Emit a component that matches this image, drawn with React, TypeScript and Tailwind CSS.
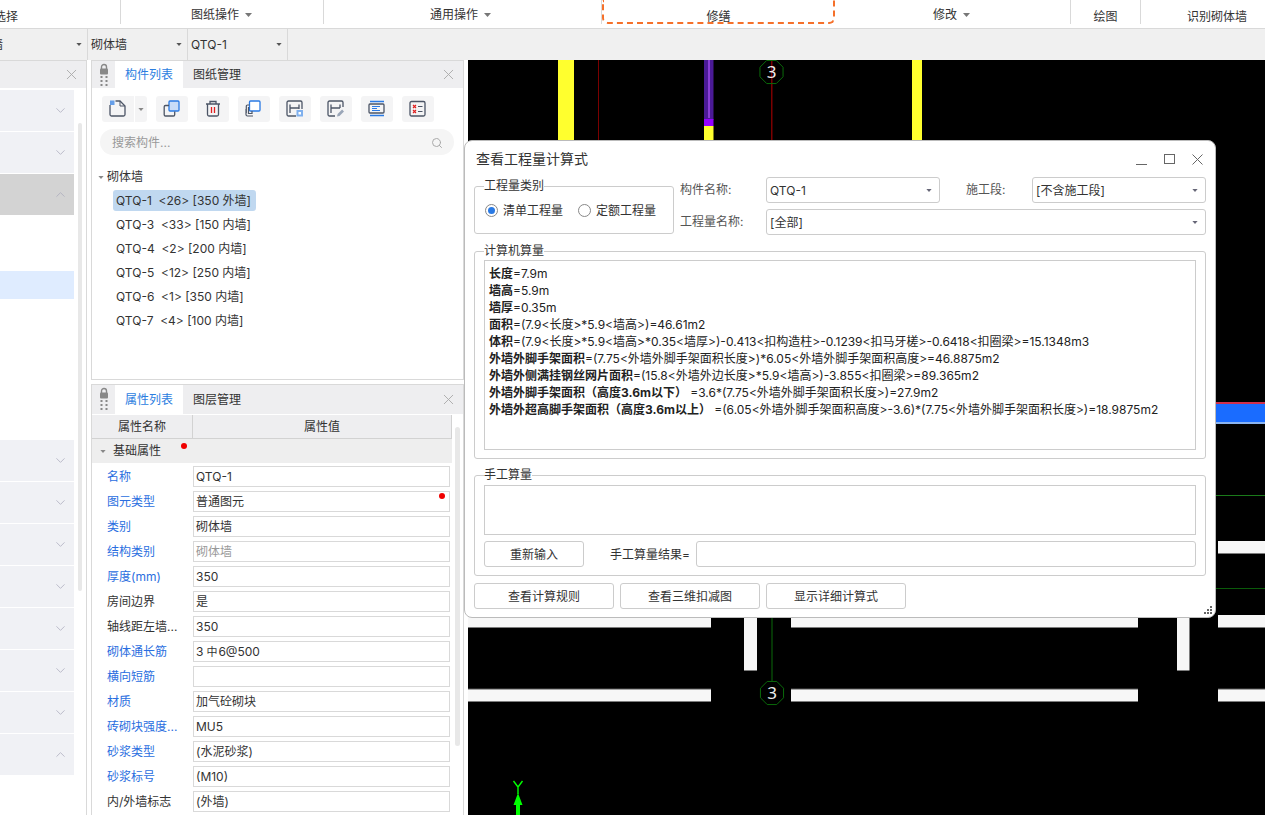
import { ChevronDown, ChevronUp, Search, X } from 'lucide-react';
import type { ReactNode } from 'react';

const leftItems = [
  { h: 'h-[41px]', bg: 'bg-[#f0f1f5]', mt: 'mt-[2px]', up: false },
  { h: 'h-[41px]', bg: 'bg-[#f0f1f5]', mt: 'mt-px', up: false },
  { h: 'h-[41px]', bg: 'bg-[#d3d3d3]', mt: 'mt-px', up: true },
];
const leftItemsLower = [false, false, false, false, false, false, false, true];

const components = [
  'QTQ-1 \u00a0<26> [350 外墙]',
  'QTQ-3 \u00a0<33> [150 内墙]',
  'QTQ-4 \u00a0<2> [200 内墙]',
  'QTQ-5 \u00a0<12> [250 内墙]',
  'QTQ-6 \u00a0<1> [350 内墙]',
  'QTQ-7 \u00a0<4> [100 内墙]',
];

const props: { label: string; value: ReactNode; blue?: boolean; muted?: boolean; dot?: boolean }[] = [
  { label: '名称', value: 'QTQ-1', blue: true },
  { label: '图元类型', value: '普通图元', blue: true, dot: true },
  { label: '类别', value: '砌体墙', blue: true },
  { label: '结构类别', value: '砌体墙', blue: true, muted: true },
  { label: '厚度(mm)', value: '350', blue: true },
  { label: '房间边界', value: '是' },
  { label: '轴线距左墙...', value: '350' },
  {
    label: '砌体通长筋',
    value: (
      <>
        3<span className="ml-[3px] mr-px align-[2px] text-[11px]">中</span>6@500
      </>
    ),
    blue: true,
  },
  { label: '横向短筋', value: '', blue: true },
  { label: '材质', value: '加气砼砌块', blue: true },
  { label: '砖砌块强度...', value: 'MU5', blue: true },
  { label: '砂浆类型', value: '(水泥砂浆)', blue: true },
  { label: '砂浆标号', value: '(M10)', blue: true },
  { label: '内/外墙标志', value: '(外墙)' },
];

const formulas = [
  ['长度', '=7.9m'],
  ['墙高', '=5.9m'],
  ['墙厚', '=0.35m'],
  ['面积', '=(7.9<长度>*5.9<墙高>)=46.61m2'],
  ['体积', '=(7.9<长度>*5.9<墙高>*0.35<墙厚>)-0.413<扣构造柱>-0.1239<扣马牙槎>-0.6418<扣圈梁>=15.1348m3'],
  ['外墙外脚手架面积', '=(7.75<外墙外脚手架面积长度>)*6.05<外墙外脚手架面积高度>=46.8875m2'],
  ['外墙外侧满挂钢丝网片面积', '=(15.8<外墙外边长度>*5.9<墙高>)-3.855<扣圈梁>=89.365m2'],
  ['外墙外脚手架面积（高度3.6m以下）', ' =3.6*(7.75<外墙外脚手架面积长度>)=27.9m2'],
  ['外墙外超高脚手架面积（高度3.6m以上）', ' =(6.05<外墙外脚手架面积高度>-3.6)*(7.75<外墙外脚手架面积长度>)=18.9875m2'],
];

function Caret({ color = '#777', size = 7 }: { color?: string; size?: number }) {
  return (
    <svg width={size} height={size - 3} viewBox="0 0 7 4" className="shrink-0">
      <path d="M0 0h7L3.5 4z" fill={color} />
    </svg>
  );
}

function Lock() {
  return (
    <svg width="10" height="24" viewBox="0 0 10 24" className="shrink-0">
      <path d="M2.5 6V4a2.5 2.5 0 0 1 5 0v2" fill="none" stroke="#888" strokeWidth="1.4" />
      <rect x="1" y="5.5" width="8" height="6" rx="1" fill="#888" />
      {[14, 18, 22].map((y) => (
        <g key={y} fill="#888">
          <rect x="1.5" y={y - 1} width="2" height="2" />
          <rect x="6.5" y={y - 1} width="2" height="2" />
        </g>
      ))}
    </svg>
  );
}

function PanelTabs({ active, other, height, nudge = '' }: { active: string; other: string; height: string; nudge?: string }) {
  return (
    <div className={`flex shrink-0 items-stretch bg-[#eeeef0] ${height}`}>
      <div className="flex w-[23px] justify-center pt-[2px]">
        <Lock />
      </div>
      <div className={`flex w-[68px] items-center justify-center bg-white text-[#2b7de0] ${nudge}`}>{active}</div>
      <div className={`ml-[10px] flex items-center ${nudge}`}>{other}</div>
      <X size={17} strokeWidth={1.3} className="ml-auto mr-[6px] self-center text-[#aaa]" />
    </div>
  );
}

const dark = '#4c5566';
const blue = '#2a7ae4';

const toolIcons: ReactNode[] = [
  <>
    <rect x="13" y="5" width="10" height="10" rx="1" fill="#c8dcf8" stroke={blue} strokeWidth="1.3" />
    <path d="M13 9.5H9.5A1.3 1.3 0 0 0 8.2 10.8v7.9A1.3 1.3 0 0 0 9.5 20h7.9a1.3 1.3 0 0 0 1.3-1.3V15.5" fill="none" stroke={dark} strokeWidth="1.3" />
  </>,
  <>
    <path d="M9 8h14M13 8V5.5h6V8M10.5 8v10.5a1.5 1.5 0 0 0 1.5 1.5h8a1.5 1.5 0 0 0 1.5-1.5V8" fill="none" stroke={dark} strokeWidth="1.3" />
    <path d="M14.5 11v6M17.5 11v6" stroke="#e02020" strokeWidth="1.3" />
  </>,
  <>
    <rect x="11.5" y="5" width="10.5" height="10" rx="1" fill="#fff" stroke={blue} strokeWidth="1.3" />
    <path d="M11.5 9H9.5A1.2 1.2 0 0 0 8.3 10.2V17M14 15v2.5H10.5V11M8 13v5.5A1.5 1.5 0 0 0 9.5 20H15" fill="none" stroke={dark} strokeWidth="1.2" />
  </>,
  <>
    <path d="M17 20H9.5A1.5 1.5 0 0 1 8 18.5v-12A1.5 1.5 0 0 1 9.5 5h12A1.5 1.5 0 0 1 23 6.500V13M11 8.500V17M11 12h9M20 8.500V13" fill="none" stroke={dark} strokeWidth="1.3" />
    <rect x="17.500" y="14" width="6.500" height="6.500" fill="#7fb0ee" />
    <rect x="19.500" y="16" width="2.500" height="2.500" fill="#fff" />
  </>,
  <>
    <path d="M15 20H9.500A1.500 1.500 0 0 1 8 18.500v-12A1.500 1.500 0 0 1 9.500 5h12A1.500 1.500 0 0 1 23 6.500V11M11 8.500V17M11 12h9M20 8.500V12" fill="none" stroke={dark} strokeWidth="1.3" />
    <path d="M17 20.500l.6-2.500 4.500-4.500 1.900 1.900-4.500 4.500z" fill="#9aa6b8" />
  </>,
  <>
    <path d="M9 5.500h14M9 19.500h14" stroke={blue} strokeWidth="1.300" />
    <rect x="8" y="8" width="15" height="9" rx="1" fill="none" stroke={dark} strokeWidth="1.300" />
    <path d="M11 10.500h8M11 12.500h5M11 14.500h8" stroke={blue} strokeWidth="1.100" />
  </>,
  <>
    <rect x="8" y="5.500" width="15" height="14.500" rx="1.500" fill="none" stroke={dark} strokeWidth="1.300" />
    <path d="M11 9l3 3M14 9l-3 3M11 14l3 3M14 14l-3 3" stroke="#e02020" strokeWidth="1.200" />
    <path d="M16 10.500h4.500M16 15.500h4.500" stroke={dark} strokeWidth="1.200" />
  </>,
];

function Toolbar() {
  return (
    <div className="mt-[8px] flex h-[26px] items-stretch gap-[9px] pl-[10px]">
      <div className="flex rounded-[3px] bg-[#f4f4f5]">
        <svg width="32" height="26" viewBox="0 0 32 26">
          <path d="M8 9v9.500A1.500 1.500 0 0 0 9.500 20h12a1.500 1.500 0 0 0 1.500-1.500V10l-5-5h-4.500" fill="none" stroke={dark} strokeWidth="1.300" />
          <path d="M18 5v5h5" fill="none" stroke={dark} strokeWidth="1" />
          <rect x="8" y="4.500" width="4.500" height="4.500" fill={blue} opacity="0.7" />
        </svg>
        <div className="flex w-[13px] items-center justify-center border-l border-white">
          <Caret color="#888" size={6} />
        </div>
      </div>
      {toolIcons.map((icon, i) => (
        <div key={i} className="w-[32px] rounded-[3px] bg-[#f4f4f5]">
          <svg width="32" height="26" viewBox="0 0 32 26">
            {icon}
          </svg>
        </div>
      ))}
    </div>
  );
}

function DropBox({ text, className }: { text: string; className: string }) {
  return (
    <div className={`flex h-[26px] items-center rounded-[3px] border border-[#ccc] pl-[3px] pr-[7px] pt-px text-[#333] ${className}`}>
      <span>{text}</span>
      <span className="ml-auto">
        <Caret color="#667" size={6} />
      </span>
    </div>
  );
}

function Group({ title, className, children }: { title: string; className: string; children?: ReactNode }) {
  return (
    <div className={`relative rounded-[3px] border border-[#ccc] ${className}`}>
      <span className="absolute left-[9px] top-[-10px] bg-white leading-[18px]">{title}</span>
      {children}
    </div>
  );
}

function DialogButton({ text, className }: { text: string; className: string }) {
  return (
    <div className={`flex h-[26px] items-center justify-center rounded-[3px] border border-[#ccc] bg-white pt-px ${className}`}>
      {text}
    </div>
  );
}

function Canvas() {
  const hBars = [
    [468, 711],
    [791, 1138],
    [1218, 1265],
  ];
  const axis = (cx: number, cy: number) => (
    <>
      <polygon
        points={[0, 1, 2, 3, 4, 5, 6, 7]
          .map((i) => {
            const a = Math.PI / 8 + (i * Math.PI) / 4;
            return `${cx + 12.5 * Math.cos(a)},${cy + 12.5 * Math.sin(a)}`;
          })
          .join(' ')}
        fill="none"
        stroke="#0a6a0a"
      />
      <text x={cx} y={cy + 6} textAnchor="middle" fill="#eee" fontSize="17" fontFamily="Noto Sans, sans-serif">
        3
      </text>
    </>
  );
  return (
    <svg width="797" height="755" viewBox="468 60 797 755" className="block bg-black">
      <rect x="558" y="60" width="16" height="80" fill="#ffff2e" />
      <rect x="912" y="60" width="10" height="80" fill="#ffff2e" />
      <rect x="704" y="60" width="9.500" height="60" fill="#4a1a96" />
      <rect x="708" y="60" width="2" height="58" fill="#8a3ed8" />
      <rect x="704" y="119" width="9.500" height="7" fill="#9400ff" />
      <rect x="704" y="126" width="9.500" height="14" fill="#ffff2e" />
      <rect x="598" y="60" width="1" height="80" fill="#7a0000" />
      <rect x="771" y="60" width="1.500" height="80" fill="#7a0000" />
      {axis(771.5, 72)}

      <rect x="1216" y="402" width="49" height="2" fill="#d0304c" />
      <rect x="1216" y="404" width="49" height="19" fill="#1a6cff" />
      <rect x="1216" y="422" width="49" height="2" fill="#8ab4f0" />
      <rect x="1216" y="495" width="49" height="1" fill="#1a7a1a" />
      <rect x="1216" y="588" width="49" height="1" fill="#0a5a0a" />
      <rect x="1218" y="541" width="47" height="12.500" fill="#f7f7f7" />

      {hBars.map(([a, b]) => (
        <rect key={a} x={a} y="615" width={b - a} height="12.500" fill="#f7f7f7" />
      ))}
      {hBars.map(([a, b]) => (
        <g key={a}>
          <rect x={a} y="689" width={b - a} height="12.500" fill="#f7f7f7" />
          <rect x={a} y="688.500" width={b - a} height="1" fill="#555" />
        </g>
      ))}
      <rect x="744" y="618" width="13" height="52.500" fill="#f7f7f7" />
      <rect x="1177" y="618" width="12.500" height="52.500" fill="#f7f7f7" />
      <rect x="771.500" y="618" width="1" height="63" fill="#0a6a0a" />
      {axis(772, 693)}

      <path d="M513.500 781l4.500 6 4.500-6M518 787v7" fill="none" stroke="#00ff00" strokeWidth="1.400" />
      <path d="M518 793l4.500 12H520v10h-4v-10h-2.500z" fill="#00ff00" />
    </svg>
  );
}

export default function App() {
  return (
    <div className="relative flex h-[815px] w-[1265px] flex-col overflow-hidden bg-white text-[12px] leading-[18px] text-[#333] [font-family:'Inter','Noto_Sans_CJK_SC',sans-serif]">
      {/* ribbon group labels */}
      <div className="flex h-[29px] shrink-0 border-b border-[#d9d9d9] bg-white">
        <div className="h-[24px] w-[121px] border-r border-[#d9d9d9] pl-0 pt-[8px]">
          <span className="-ml-[6px] block">选择</span>
        </div>
        <div className="flex h-[24px] w-[203px] items-center gap-[6px] border-r border-[#d9d9d9] pl-[70px] pt-[6px]">
          图纸操作 <Caret />
        </div>
        <div className="flex h-[24px] w-[278px] items-center gap-[6px] border-r border-[#d9d9d9] pl-[106px] pt-[6px]">
          通用操作 <Caret />
        </div>
        <div className="h-[24px] w-[233px] rounded-b-[6px] border-x-2 border-b-2 border-dashed border-[#f5702a] pt-[8px] text-center">
          修缮
        </div>
        <div className="flex h-[24px] w-[236px] items-center gap-[6px] border-r border-[#d9d9d9] pl-[98px] pt-[6px]">
          修改 <Caret />
        </div>
        <div className="h-[24px] w-[70px] border-r border-[#d9d9d9] pt-[8px] text-center">绘图</div>
        <div className="flex-1 pl-[46px] pt-[8px]">识别砌体墙</div>
      </div>

      {/* floor / type / name selectors */}
      <div className="flex h-[31px] shrink-0 bg-[#f0f0f0]">
        <div className="flex w-[88px] items-center justify-end border-r border-[#d9d9d9] pr-[5px]">
          <span className="mr-auto -ml-[9px]">墙</span>
          <Caret color="#555" size={6} />
        </div>
        <div className="flex w-[100px] items-center justify-between border-r border-[#d9d9d9] pl-[3px] pr-[5px]">
          砌体墙 <Caret color="#555" size={6} />
        </div>
        <div className="flex w-[100px] items-center justify-between border-r border-[#d9d9d9] pl-[3px] pr-[5px]">
          QTQ-1 <Caret color="#555" size={6} />
        </div>
      </div>

      <div className="flex min-h-0 flex-1">
        {/* left navigation, clipped by the window */}
        <div className="flex w-[87px] shrink-0 flex-col border-r border-t border-[#d9d9d9]">
          <div className="flex h-[27px] shrink-0 items-center justify-end bg-[#eeeef0] pr-[6px]">
            <X size={17} strokeWidth={1.3} className="text-[#aaa]" />
          </div>
          <div className="flex flex-1">
            <div className="flex w-[74px] flex-col">
              {leftItems.map((item, i) => (
                <div key={i} className={`flex items-center justify-end pr-[6px] ${item.h} ${item.bg} ${item.mt}`}>
                  {item.up ? (
                    <ChevronUp size={15} strokeWidth={1.2} className="text-[#aab]" />
                  ) : (
                    <ChevronDown size={15} strokeWidth={1.2} className="text-[#aab]" />
                  )}
                </div>
              ))}
              <div className="mt-[56px] h-[28px] bg-[#dfecff]" />
              <div className="h-[141px]" />
              {leftItemsLower.map((up, i) => (
                <div key={i} className="mb-px flex h-[41px] items-center justify-end bg-[#f0f1f5] pr-[6px]">
                  {up ? (
                    <ChevronUp size={15} strokeWidth={1.2} className="text-[#aab]" />
                  ) : (
                    <ChevronDown size={15} strokeWidth={1.2} className="text-[#aab]" />
                  )}
                </div>
              ))}
            </div>
            <div className="ml-[4px] mt-[35px] h-[468px] w-[4px] rounded-full bg-[#e8e8e8]" />
          </div>
        </div>

        {/* component and property panels */}
        <div className="ml-[4px] flex w-[373px] shrink-0 flex-col">
          <div className="flex h-[320px] shrink-0 flex-col border border-[#d9d9d9]">
            <PanelTabs active="构件列表" other="图纸管理" height="h-[27px]" nudge="pt-px" />
            <Toolbar />
            <div className="ml-[8px] mr-[9px] mt-[7px] flex h-[26px] items-center rounded-full bg-[#f5f5f5] pl-[12px] pr-[11px] pt-px text-[#999]">
              搜索构件...
              <Search size={12} className="ml-auto text-[#aaa]" />
            </div>
            <div className="ml-[6px] mt-[13px] flex items-center gap-[3px]">
              <Caret color="#888" size={6} />
              砌体墙
            </div>
            <div className="ml-[21px] mt-[4px] flex flex-col items-start">
              {components.map((c, i) => (
                <div
                  key={c}
                  className={`flex h-[21px] w-[143px] items-center whitespace-nowrap rounded-[3px] pl-[3px] ${i === 0 ? 'bg-[#c0d8f0]' : ''} ${i > 0 ? 'mt-[3px]' : ''}`}
                >
                  {c}
                </div>
              ))}
            </div>
          </div>

          <div className="mt-[4px] flex min-h-0 flex-1 flex-col border-x border-t border-[#d9d9d9]">
            <PanelTabs active="属性列表" other="图层管理" height="h-[29px]" />
            <div className="flex min-h-0 flex-1">
              <div className="w-[360px] shrink-0">
                <div className="mt-px grid h-[24px] grid-cols-[101px_1fr] border-b border-r border-[#d2d2d2] bg-[#eeeef0] text-center">
                  <div className="flex items-center justify-center border-r border-[#d2d2d2]">属性名称</div>
                  <div className="flex items-center justify-center">属性值</div>
                </div>
                <div className="relative flex h-[24px] items-center bg-[#eeeeee] pl-[8px]">
                  <Caret color="#888" size={6} />
                  <span className="ml-[7px]">基础属性</span>
                  <span className="absolute left-[89px] top-[4px] h-[6px] w-[6px] rounded-full bg-[#f00000]" />
                </div>
                <div className="flex flex-col gap-[4px] pt-[3px]">
                  {props.map((p) => (
                    <div key={p.label} className="grid h-[21px] grid-cols-[101px_257px] items-stretch">
                      <div className={`flex items-center whitespace-nowrap pl-[15px] ${p.blue ? 'text-[#2a6ee0]' : ''}`}>{p.label}</div>
                      <div className={`relative flex items-center border border-[#d9d9d9] pl-[2px] ${p.muted ? 'text-[#999]' : ''}`}>
                        {p.value}
                        {p.dot && <span className="absolute right-[4px] top-[1px] h-[6px] w-[6px] rounded-full bg-[#f00000]" />}
                      </div>
                    </div>
                  ))}
                </div>
              </div>
              <div className="ml-[3px] mt-[13px] h-[319px] w-[5px] rounded-full bg-[#e8e8e8]" />
            </div>
          </div>
        </div>

        <div className="w-[4px] shrink-0 bg-white" />
        <Canvas />
      </div>

      {/* quantity formula dialog */}
      <div className="absolute left-[464px] top-[140px] flex h-[478px] w-[752px] flex-col rounded-[8px] border border-[#bbb] bg-white px-[9px]">
        <div className="flex h-[36px] shrink-0 items-center pl-[2px] text-[14px] text-[#333]">
          查看工程量计算式
          <div className="ml-auto mr-[3px] flex items-center gap-[17px]">
            <span className="mt-[10px] block h-px w-[11px] bg-[#666]" />
            <span className="block h-[10px] w-[11px] border border-[#666]" />
            <svg width="11" height="11" viewBox="0 0 11 11">
              <path d="M.5.5l10 10M10.500.5l-10 10" stroke="#666" fill="none" />
            </svg>
          </div>
        </div>
        <div className="flex shrink-0">
          <Group title="工程量类别" className="mt-[9px] h-[48px] w-[200px]">
            <div className="flex h-full items-center pl-[10px]">
              <span className="flex h-[13px] w-[13px] items-center justify-center rounded-full border border-[#888]">
                <span className="h-[7px] w-[7px] rounded-full bg-[#2a7ae4]" />
              </span>
              <span className="ml-[5px] pt-px">清单工程量</span>
              <span className="ml-[15px] h-[13px] w-[13px] rounded-full border border-[#888]" />
              <span className="ml-[5px] pt-px">定额工程量</span>
            </div>
          </Group>
          <div className="ml-[6px] flex-1">
            <div className="flex items-center">
              <span className="w-[86px] text-[#555]">构件名称:</span>
              <DropBox text="QTQ-1" className="w-[174px]" />
              <span className="ml-[26px] w-[66px] text-[#555]">施工段:</span>
              <DropBox text="[不含施工段]" className="w-[174px]" />
            </div>
            <div className="mt-[6px] flex items-center">
              <span className="w-[86px] text-[#555]">工程量名称:</span>
              <DropBox text="[全部]" className="flex-1" />
            </div>
          </div>
        </div>
        <Group title="计算机算量" className="mt-[16px] h-[208px] shrink-0 px-[9px] pt-[8px]">
          <div className="h-[190px] border border-[#ccc] pl-[4px] pt-[4px] text-[#222]">
            {formulas.map(([name, expr]) => (
              <div key={name} className="h-[17px] whitespace-pre leading-[17px]">
                <b className="font-bold">{name}</b>
                {expr}
              </div>
            ))}
          </div>
        </Group>
        <Group title="手工算量" className="mt-[16px] h-[101px] shrink-0 px-[9px] pt-[9px]">
          <div className="h-[50px] border border-[#ccc]" />
          <div className="mt-[6px] flex items-center">
            <DialogButton text="重新输入" className="w-[100px]" />
            <span className="ml-[26px] w-[86px] pt-px">手工算量结果=</span>
            <div className="h-[26px] flex-1 rounded-[3px] border border-[#ccc]" />
          </div>
        </Group>
        <div className="mt-[7px] flex shrink-0 gap-[6px]">
          <DialogButton text="查看计算规则" className="w-[140px]" />
          <DialogButton text="查看三维扣减图" className="w-[140px]" />
          <DialogButton text="显示详细计算式" className="w-[140px]" />
        </div>
        <svg width="10" height="10" viewBox="0 0 10 10" className="absolute bottom-[2px] right-[2px]">
          <g fill="#666">
            <rect x="7" y="1" width="2" height="2" />
            <rect x="4" y="4" width="2" height="2" />
            <rect x="7" y="4" width="2" height="2" />
            <rect x="1" y="7" width="2" height="2" />
            <rect x="4" y="7" width="2" height="2" />
            <rect x="7" y="7" width="2" height="2" />
          </g>
        </svg>
      </div>
    </div>
  );
}
